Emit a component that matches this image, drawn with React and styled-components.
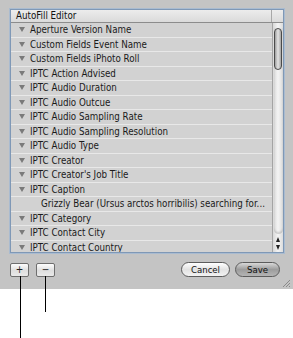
import React from 'react'
import styled, { createGlobalStyle } from 'styled-components'

const Global = createGlobalStyle`
  html, body { margin: 0; padding: 0; background: #fff; }
  body { font-family: "DejaVu Sans Condensed", "DejaVu Sans", sans-serif; }
`;

const Page = styled.div`
  position: relative;
  width: 293px;
  height: 338px;
  overflow: hidden;
`;

const Panel = styled.div`
  width: 293px;
  height: 289px;
  box-sizing: border-box;
  padding: 9px 9px 0 10px;
  background: #c4c4c4;
  display: flex;
  flex-direction: column;
  position: relative;
`;

const Table = styled.div`
  height: 244px;
  box-sizing: border-box;
  border: 1px solid #7f98b6;
  box-shadow: 0 0 0 1px #a9bbd0;
  background: #d2d2d2;
  display: flex;
  flex-direction: column;
  overflow: hidden;
`;

const Header = styled.div`
  display: flex;
  height: 13px;
  box-sizing: border-box;
  border-bottom: 1px solid #8c8c8c;
  background: linear-gradient(#ececec, #dadada);
`;

const HeaderTitle = styled.div`
  flex: 1;
  padding-left: 5px;
  font-size: 9.7px;
  line-height: 12px;
  color: #111;
`;

const HeaderCorner = styled.div`
  width: 11px;
  border-left: 1px solid #a8a8a8;
`;

const Body = styled.div`
  flex: 1;
  display: flex;
  min-height: 0;
`;

const List = styled.div`
  flex: 1;
  overflow: hidden;
`;

const Row = styled.div`
  height: 14.5px;
  box-sizing: border-box;
  border-bottom: 1px solid #e8e8e8;
  display: flex;
  align-items: center;
  padding-left: ${({ $child }) => ($child ? '30px' : '8px')};
  font-size: 9.7px;
  color: #1a1a1a;
  white-space: nowrap;
`;

const Disclosure = styled.span`
  width: 0;
  height: 0;
  border-left: 3px solid transparent;
  border-right: 3px solid transparent;
  border-top: 5px solid #7a7a7a;
  margin-right: 5px;
`;

const Scrollbar = styled.div`
  width: 11px;
  border-left: 1px solid #a4a4a4;
  background: linear-gradient(90deg, #d8d8d8, #f4f4f4 50%, #dcdcdc);
  display: flex;
  flex-direction: column;
  align-items: center;
  padding-top: 5px;
  box-sizing: border-box;
`;

const Track = styled.div`
  flex: 1;
  width: 9px;
  border-radius: 0 0 5px 5px;
  box-shadow: inset 0 -2px 2px rgba(0, 0, 0, 0.15);
  display: flex;
  justify-content: center;
`;

const Thumb = styled.div`
  width: 8px;
  height: 42px;
  box-sizing: border-box;
  border: 1.5px solid #4a4a4a;
  border-radius: 5px;
  background: linear-gradient(90deg, #9e9e9e, #e4e4e4 50%, #a4a4a4);
`;

const Arrows = styled.div`
  height: 18px;
  display: flex;
  flex-direction: column;
  align-items: center;
  justify-content: space-around;
  padding: 2px 0 1px;
  box-sizing: border-box;
`;

const Arrow = styled.span`
  width: 0;
  height: 0;
  border-left: 2.5px solid transparent;
  border-right: 2.5px solid transparent;
  ${({ $up }) => ($up ? 'border-bottom: 5px solid #222;' : 'border-top: 5px solid #222;')}
`;

const Footer = styled.div`
  display: flex;
  align-items: center;
  margin-top: 9px;
  height: 15px;
  padding-right: 4px;
`;

const SquareButton = styled.div`
  width: 19px;
  height: 14px;
  box-sizing: border-box;
  border: 1px solid #6e6e6e;
  border-radius: 2px;
  background: linear-gradient(#fdfdfd, #dedede 55%, #e9e9e9);
  display: flex;
  align-items: center;
  justify-content: center;
  font-size: 10px;
  color: #222;
  margin-right: 7px;
`;

const Spacer = styled.div`
  flex: 1;
`;

const PillButton = styled.div`
  width: ${({ $w }) => $w}px;
  height: 15px;
  box-sizing: border-box;
  border: 1px solid #5c5c5c;
  border-radius: 8px;
  background: ${({ $default }) =>
    $default
      ? 'linear-gradient(#d8d8d8, #9c9c9c 50%, #b4b4b4)'
      : 'linear-gradient(#ffffff, #e2e2e2 50%, #f2f2f2)'};
  display: flex;
  align-items: center;
  justify-content: center;
  font-size: 9.5px;
  color: #111;
  margin-left: 5px;
`;

const Grip = styled.svg`
  position: absolute;
  right: 2px;
  bottom: 1px;
`;

const Callout = styled.div`
  position: absolute;
  left: ${({ $x }) => $x}px;
  top: 276px;
  width: 1px;
  height: ${({ $h }) => $h}px;
  background: #000;
`;

const rows = [
  ['Aperture Version Name'],
  ['Custom Fields Event Name'],
  ['Custom Fields iPhoto Roll'],
  ['IPTC Action Advised'],
  ['IPTC Audio Duration'],
  ['IPTC Audio Outcue'],
  ['IPTC Audio Sampling Rate'],
  ['IPTC Audio Sampling Resolution'],
  ['IPTC Audio Type'],
  ['IPTC Creator'],
  ["IPTC Creator's Job Title"],
  ['IPTC Caption'],
  ['Grizzly Bear (Ursus arctos horribilis) searching for...', true],
  ['IPTC Category'],
  ['IPTC Contact City'],
  ['IPTC Contact Country'],
];

const App = () => {
  return (
    <Page>
      <Global />
      <Panel>
        <Table>
          <Header>
            <HeaderTitle>AutoFill Editor</HeaderTitle>
            <HeaderCorner />
          </Header>
          <Body>
            <List>
              {rows.map(([label, child]) => (
                <Row key={label} $child={child}>
                  {!child && <Disclosure />}
                  {label}
                </Row>
              ))}
            </List>
            <Scrollbar>
              <Track>
                <Thumb />
              </Track>
              <Arrows>
                <Arrow $up />
                <Arrow />
              </Arrows>
            </Scrollbar>
          </Body>
        </Table>
        <Footer>
          <SquareButton>+</SquareButton>
          <SquareButton>−</SquareButton>
          <Spacer />
          <PillButton $w={49}>Cancel</PillButton>
          <PillButton $w={45} $default>Save</PillButton>
        </Footer>
        <Grip width="9" height="9" viewBox="0 0 9 9">
          <path d="M8 1 L1 8 M8 4 L4 8 M8 7 L7 8" stroke="#8a8a8a" strokeWidth="1" />
        </Grip>
      </Panel>
      <Callout $x={20} $h={62} />
      <Callout $x={45} $h={36} />
    </Page>
  )
}

export default App
